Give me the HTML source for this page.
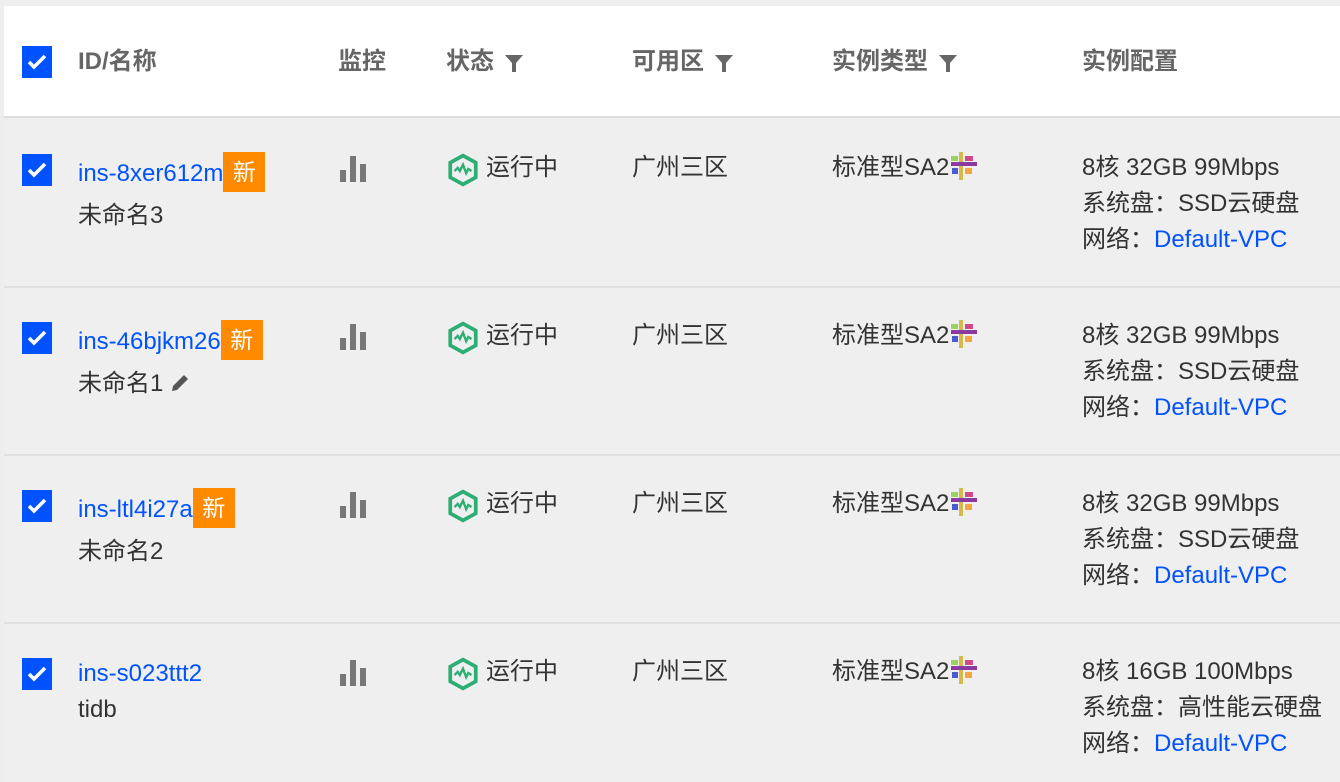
<!DOCTYPE html>
<html><head><meta charset="utf-8"><style>
*{margin:0;padding:0;box-sizing:border-box}
html,body{width:1340px;height:782px;overflow:hidden}
body{background:#eee;position:relative;font-family:"Liberation Sans","Noto Sans CJK SC",sans-serif;color:#333;font-size:24px}
.hdr{position:absolute;left:4px;top:6px;width:1336px;height:112px;background:#fff;border-bottom:2px solid #ddd}
.row{position:absolute;left:4px;width:1336px;height:168px;background:#efefef;border-bottom:2px solid #e0e0e0}
.a{position:absolute;white-space:nowrap;line-height:36px}
.h{font-weight:bold;color:#666;top:38px;line-height:36px}
.cb{position:absolute;left:18px;width:30px;height:32px;background:#0052ff}
.cb svg{position:absolute;left:5px;top:7px}
.blue{color:#0052ff}
.new{display:inline-block;background:#ff8a00;color:#fff;width:42px;height:40px;line-height:40px;text-align:center;vertical-align:top;margin-top:-4px;font-size:23px}
.filt{display:inline-block;margin-left:10px;vertical-align:middle}
</style></head><body>
<div class="hdr">
<div class="cb" style="top:40px"><svg width="20" height="18" viewBox="0 0 20 18"><path d="M2 9l5 5 11-11" stroke="#fff" stroke-width="3.5" fill="none"/></svg></div>
<div class="a h" style="left:74px">ID/名称</div>
<div class="a h" style="left:334px">监控</div>
<div class="a h" style="left:442px">状态<svg class="filt" width="20" height="20" viewBox="0 0 20 20"><path d="M1 2h18l-7 8v9h-4v-9z" fill="#666"/></svg></div>
<div class="a h" style="left:628px">可用区<svg class="filt" width="20" height="20" viewBox="0 0 20 20"><path d="M1 2h18l-7 8v9h-4v-9z" fill="#666"/></svg></div>
<div class="a h" style="left:828px">实例类型<svg class="filt" width="20" height="20" viewBox="0 0 20 20"><path d="M1 2h18l-7 8v9h-4v-9z" fill="#666"/></svg></div>
<div class="a h" style="left:1078px">实例配置</div>
</div>

<div class="row" style="top:120px">
<div class="cb" style="top:34px"><svg width="20" height="18" viewBox="0 0 20 18"><path d="M2 9l5 5 11-11" stroke="#fff" stroke-width="3.5" fill="none"/></svg></div>
<div class="a blue" style="left:74px;top:36px">ins-8xer612m<span class="new">新</span></div>
<div class="a" style="left:74px;top:78px">未命名3</div>
<svg class="a" style="left:336px;top:36px" width="28" height="28"><rect x="0" y="14" width="6" height="12" fill="#777"/><rect x="10" y="0" width="6" height="26" fill="#777"/><rect x="20" y="8" width="6" height="18" fill="#777"/></svg>
<svg class="a" style="left:442px;top:33px" width="34" height="34" viewBox="0 0 32 32"><path d="M16 2.5L28 9v14L16 29.5 4 23V9z" fill="none" stroke="#2dae73" stroke-width="3.5"/><path d="M8 17l3-3 2 3 3-6 3 8 2-4 3 2" fill="none" stroke="#2dae73" stroke-width="2.2"/></svg>
<div class="a" style="left:482px;top:30px">运行中</div>
<div class="a" style="left:628px;top:30px">广州三区</div>
<div class="a" style="left:828px;top:30px">标准型SA2<svg width="30" height="32" style="vertical-align:top" viewBox="0 0 30 32"><rect x="10" y="2" width="4" height="28" fill="#d9b84a"/><rect x="2" y="12" width="26" height="4" fill="#8a3aa0"/><rect x="2" y="6" width="7" height="5" fill="#9bd163"/><rect x="16" y="6" width="8" height="5" fill="#d04a8a"/><rect x="3" y="18" width="6" height="6" fill="#4a5ad0"/><rect x="16" y="18" width="7" height="6" fill="#f5a440"/></svg></div>
<div class="a" style="left:1078px;top:30px">8核 32GB 99Mbps<br>系统盘：SSD云硬盘<br>网络：<span class="blue">Default-VPC</span></div>
</div>

<div class="row" style="top:290px;height:166px">
<div class="cb" style="top:32px"><svg width="20" height="18" viewBox="0 0 20 18"><path d="M2 9l5 5 11-11" stroke="#fff" stroke-width="3.5" fill="none"/></svg></div>
<div class="a blue" style="left:74px;top:34px">ins-46bjkm26<span class="new">新</span></div>
<div class="a" style="left:74px;top:76px">未命名1 <svg width="20" height="20" viewBox="0 0 20 20" style="vertical-align:-2px"><path d="M2 18l1-5L14 2l4 4L7 17z" fill="#555"/></svg></div>
<svg class="a" style="left:336px;top:34px" width="28" height="28"><rect x="0" y="14" width="6" height="12" fill="#777"/><rect x="10" y="0" width="6" height="26" fill="#777"/><rect x="20" y="8" width="6" height="18" fill="#777"/></svg>
<svg class="a" style="left:442px;top:31px" width="34" height="34" viewBox="0 0 32 32"><path d="M16 2.5L28 9v14L16 29.5 4 23V9z" fill="none" stroke="#2dae73" stroke-width="3.5"/><path d="M8 17l3-3 2 3 3-6 3 8 2-4 3 2" fill="none" stroke="#2dae73" stroke-width="2.2"/></svg>
<div class="a" style="left:482px;top:28px">运行中</div>
<div class="a" style="left:628px;top:28px">广州三区</div>
<div class="a" style="left:828px;top:28px">标准型SA2<svg width="30" height="32" style="vertical-align:top" viewBox="0 0 30 32"><rect x="10" y="2" width="4" height="28" fill="#d9b84a"/><rect x="2" y="12" width="26" height="4" fill="#8a3aa0"/><rect x="2" y="6" width="7" height="5" fill="#9bd163"/><rect x="16" y="6" width="8" height="5" fill="#d04a8a"/><rect x="3" y="18" width="6" height="6" fill="#4a5ad0"/><rect x="16" y="18" width="7" height="6" fill="#f5a440"/></svg></div>
<div class="a" style="left:1078px;top:28px">8核 32GB 99Mbps<br>系统盘：SSD云硬盘<br>网络：<span class="blue">Default-VPC</span></div>
</div>

<div class="row" style="top:458px;height:166px">
<div class="cb" style="top:32px"><svg width="20" height="18" viewBox="0 0 20 18"><path d="M2 9l5 5 11-11" stroke="#fff" stroke-width="3.5" fill="none"/></svg></div>
<div class="a blue" style="left:74px;top:34px">ins-ltl4i27a<span class="new">新</span></div>
<div class="a" style="left:74px;top:76px">未命名2</div>
<svg class="a" style="left:336px;top:34px" width="28" height="28"><rect x="0" y="14" width="6" height="12" fill="#777"/><rect x="10" y="0" width="6" height="26" fill="#777"/><rect x="20" y="8" width="6" height="18" fill="#777"/></svg>
<svg class="a" style="left:442px;top:31px" width="34" height="34" viewBox="0 0 32 32"><path d="M16 2.5L28 9v14L16 29.5 4 23V9z" fill="none" stroke="#2dae73" stroke-width="3.5"/><path d="M8 17l3-3 2 3 3-6 3 8 2-4 3 2" fill="none" stroke="#2dae73" stroke-width="2.2"/></svg>
<div class="a" style="left:482px;top:28px">运行中</div>
<div class="a" style="left:628px;top:28px">广州三区</div>
<div class="a" style="left:828px;top:28px">标准型SA2<svg width="30" height="32" style="vertical-align:top" viewBox="0 0 30 32"><rect x="10" y="2" width="4" height="28" fill="#d9b84a"/><rect x="2" y="12" width="26" height="4" fill="#8a3aa0"/><rect x="2" y="6" width="7" height="5" fill="#9bd163"/><rect x="16" y="6" width="8" height="5" fill="#d04a8a"/><rect x="3" y="18" width="6" height="6" fill="#4a5ad0"/><rect x="16" y="18" width="7" height="6" fill="#f5a440"/></svg></div>
<div class="a" style="left:1078px;top:28px">8核 32GB 99Mbps<br>系统盘：SSD云硬盘<br>网络：<span class="blue">Default-VPC</span></div>
</div>

<div class="row" style="top:626px;height:156px;border:none">
<div class="cb" style="top:32px"><svg width="20" height="18" viewBox="0 0 20 18"><path d="M2 9l5 5 11-11" stroke="#fff" stroke-width="3.5" fill="none"/></svg></div>
<div class="a blue" style="left:74px;top:30px">ins-s023ttt2</div>
<div class="a" style="left:74px;top:66px">tidb</div>
<svg class="a" style="left:336px;top:34px" width="28" height="28"><rect x="0" y="14" width="6" height="12" fill="#777"/><rect x="10" y="0" width="6" height="26" fill="#777"/><rect x="20" y="8" width="6" height="18" fill="#777"/></svg>
<svg class="a" style="left:442px;top:31px" width="34" height="34" viewBox="0 0 32 32"><path d="M16 2.5L28 9v14L16 29.5 4 23V9z" fill="none" stroke="#2dae73" stroke-width="3.5"/><path d="M8 17l3-3 2 3 3-6 3 8 2-4 3 2" fill="none" stroke="#2dae73" stroke-width="2.2"/></svg>
<div class="a" style="left:482px;top:28px">运行中</div>
<div class="a" style="left:628px;top:28px">广州三区</div>
<div class="a" style="left:828px;top:28px">标准型SA2<svg width="30" height="32" style="vertical-align:top" viewBox="0 0 30 32"><rect x="10" y="2" width="4" height="28" fill="#d9b84a"/><rect x="2" y="12" width="26" height="4" fill="#8a3aa0"/><rect x="2" y="6" width="7" height="5" fill="#9bd163"/><rect x="16" y="6" width="8" height="5" fill="#d04a8a"/><rect x="3" y="18" width="6" height="6" fill="#4a5ad0"/><rect x="16" y="18" width="7" height="6" fill="#f5a440"/></svg></div>
<div class="a" style="left:1078px;top:28px">8核 16GB 100Mbps<br>系统盘：高性能云硬盘<br>网络：<span class="blue">Default-VPC</span></div>
</div>
</body></html>
